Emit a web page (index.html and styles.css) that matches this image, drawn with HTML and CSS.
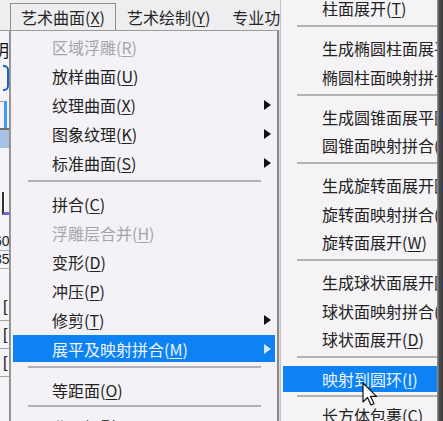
FILE: index.html
```html
<!DOCTYPE html>
<html lang="zh-CN">
<head>
    <meta charset="UTF-8">
    <title>艺术曲面菜单</title>
    <link rel="stylesheet" href="styles.css">
</head>
<body>
    <div class="menubar">
        <span class="mb-item open">艺术曲面(<u>X</u>)</span>
        <span class="mb-item">艺术绘制(<u>Y</u>)</span>
        <span class="mb-item">专业功能</span>
    </div>
    <div class="workspace">
        <div class="sidebar">
            <div class="frag frag-text">明</div>
            <div class="frag frag-box"></div>
            <div class="frag frag-lines"></div>
            <div class="frag frag-fill"></div>
            <div class="frag frag-icon"></div>
            <div class="frag frag-num">60</div>
            <div class="frag frag-num">35</div>
            <div class="frag frag-bracket">[</div>
            <div class="frag frag-bracket">[</div>
            <div class="frag frag-bracket">[</div>
        </div>
    </div>

    <!-- dropdown of 艺术曲面 -->
    <div class="menu main-menu">
        <div class="item disabled"><span class="label">区域浮雕(<u>R</u>)</span></div>
        <div class="item"><span class="label">放样曲面(<u>U</u>)</span></div>
        <div class="item"><span class="label">纹理曲面(<u>X</u>)</span><span class="arrow"></span></div>
        <div class="item"><span class="label">图象纹理(<u>K</u>)</span><span class="arrow"></span></div>
        <div class="item"><span class="label">标准曲面(<u>S</u>)</span><span class="arrow"></span></div>
        <div class="sep"></div>
        <div class="item"><span class="label">拼合(<u>C</u>)</span></div>
        <div class="item disabled"><span class="label">浮雕层合并(<u>H</u>)</span></div>
        <div class="item"><span class="label">变形(<u>D</u>)</span></div>
        <div class="item"><span class="label">冲压(<u>P</u>)</span></div>
        <div class="item"><span class="label">修剪(<u>T</u>)</span><span class="arrow"></span></div>
        <div class="item active"><span class="label">展平及映射拼合(<u>M</u>)</span><span class="arrow"></span></div>
        <div class="sep"></div>
        <div class="item"><span class="label">等距面(<u>O</u>)</span></div>
        <div class="sep last"></div>
        <div class="item"><span class="label">曲面投影(<u>J</u>)</span></div>
    </div>

    <!-- submenu of 展平及映射拼合 -->
    <div class="menu sub-menu">
        <div class="item"><span class="label">柱面展开(<u>T</u>)</span></div>
        <div class="sep"></div>
        <div class="item"><span class="label">生成椭圆柱面展平图</span></div>
        <div class="item"><span class="label">椭圆柱面映射拼合(<u>E</u>)</span></div>
        <div class="sep"></div>
        <div class="item"><span class="label">生成圆锥面展平图</span></div>
        <div class="item"><span class="label">圆锥面映射拼合(<u>N</u>)</span></div>
        <div class="sep"></div>
        <div class="item"><span class="label">生成旋转面展开图</span></div>
        <div class="item"><span class="label">旋转面映射拼合(<u>R</u>)</span></div>
        <div class="item"><span class="label">旋转面展开(<u>W</u>)</span></div>
        <div class="sep"></div>
        <div class="item"><span class="label">生成球状面展开图</span></div>
        <div class="item"><span class="label">球状面映射拼合(<u>B</u>)</span></div>
        <div class="item"><span class="label">球状面展开(<u>D</u>)</span></div>
        <div class="sep"></div>
        <div class="item active"><span class="label">映射到圆环(<u>I</u>)</span></div>
        <div class="sep short"></div>
        <div class="item"><span class="label">长方体包裹(<u>C</u>)</span></div>
    </div>

    <div class="edge"></div>

    <svg class="cursor" width="16" height="26" viewBox="0 0 16 26">
        <path d="M1 1 L1 20 L5.5 15.5 L9 23 L12 21.6 L8.6 14.4 L14.5 14.4 Z" fill="#fff" stroke="#111" stroke-width="1.2" stroke-linejoin="round"/>
    </svg>
</body>
</html>
```

FILE: styles.css
```css
body {
    margin: 0;
    width: 443px;
    height: 421px;
    overflow: hidden;
    position: relative;
    font-family: "Noto Sans CJK SC", "Noto Sans", sans-serif;
    font-size: 16px;
    color: #222;
    background-color: #f1f0f2;
}
u {
    text-decoration: underline;
    text-underline-offset: 2px;
    text-decoration-thickness: 1px;
}

/* top menu bar */
.menubar {
    display: flex;
    align-items: flex-end;
    height: 31px;
    padding-left: 10px;
    box-sizing: border-box;
    background-color: #eeedf0;
    border-bottom: 1px solid #9c9c9c;
    white-space: nowrap;
}
.mb-item {
    height: 26px;
    line-height: 26px;
    padding: 0 10px;
    border: 1px solid transparent;
    border-bottom: none;
    color: #262626;
}
.mb-item.open {
    border-color: #8e8e8e;
}

/* app behind the menu, only the left edge shows */
.workspace {
    display: flex;
    height: 390px;
}
.sidebar {
    width: 9px;
    border-right: 1px solid #8f8f8f;
    background-color: #f4f4f6;
    overflow: hidden;
    display: flex;
    flex-direction: column;
}
.frag {
    flex-shrink: 0;
}
.frag-text {
    margin-top: 8px;
    margin-left: -8px;
    height: 22px;
    line-height: 22px;
    font-size: 17px;
    color: #111;
}
.frag-box {
    margin-top: 4px;
    height: 22px;
    width: 4px;
    margin-left: 3px;
    border: 2px solid #1d64c8;
    border-left: none;
    border-radius: 0 5px 5px 0;
}
.frag-lines {
    margin-top: 10px;
    height: 26px;
    border-top: 1px solid #9a9a9a;
    border-right: 3px solid #3c9cf6;
    width: 4px;
}
.frag-fill {
    height: 18px;
    background-color: #a7c1e2;
    border-top: 2px solid #6f6f6f;
}
.frag-icon {
    margin-top: 44px;
    margin-left: 2px;
    height: 20px;
    width: 5px;
    border-left: 2px solid #333;
    border-bottom: 3px solid #6a6ad8;
}
.frag-num {
    margin-left: -6px;
    height: 17px;
    line-height: 17px;
    font-size: 14px;
    font-family: "Liberation Sans", sans-serif;
    color: #222;
    border-bottom: 1px solid #b0b0b0;
}
.frag-icon + .frag-num {
    margin-top: 18px;
}
.frag-bracket {
    height: 27px;
    line-height: 27px;
    padding-left: 3px;
    font-family: "Liberation Sans", sans-serif;
    color: #222;
    border-bottom: 1px solid #a4a4a4;
}
.frag-num + .frag-bracket {
    margin-top: 24px;
}

/* drop-down menus */
.menu {
    position: absolute;
    box-sizing: border-box;
    white-space: nowrap;
}
.main-menu {
    left: 10px;
    top: 30px;
    width: 269px;
    padding: 1px 2px;
    background-color: #f4f2f6;
    border: 1px solid #9a9a9a;
    border-right: 2px solid #8a8a8a;
    box-shadow: 2px 0 0 #dcdcdf;
}
.sub-menu {
    left: 280px;
    top: -7.25px;
    width: 200px;
    padding: 0 2px;
    background-color: #f5f3f6;
    border: 1px solid #c4c4c8;
}
.item {
    display: flex;
    align-items: center;
    height: 29px;
    padding-left: 39px;
    padding-right: 4px;
    box-sizing: border-box;
    border-top: 1px solid transparent;
    border-bottom: 1px solid transparent;
    background-clip: padding-box;
    line-height: 20px;
}
.sub-menu .item {
    height: 28.5px;
}
.item .label {
    flex: 1;
}
.item.disabled {
    color: #a5a5a8;
}
.item.active {
    background-color: #0c82f3;
    color: #eef5ff;
}
.arrow {
    width: 0;
    height: 0;
    border-left: 7px solid #111;
    border-top: 5px solid transparent;
    border-bottom: 5px solid transparent;
}
.item.active .arrow {
    border-left-color: #d6eaff;
}
.sep {
    height: 2px;
    background-color: #b2b2b4;
    margin: 3px 14px 7px 15px;
}
.sep.last {
    margin-top: 1px;
    margin-bottom: 5px;
}
.sub-menu .sep {
    margin: 3px 0 6.5px 14px;
}
.sub-menu .sep.short {
    margin-top: 2px;
    margin-bottom: 3px;
}

/* dark border of the captured frame */
.edge {
    position: absolute;
    top: 0;
    right: 0;
    width: 6px;
    height: 100%;
    background: linear-gradient(to right, #9a9a9c, #4a4a4c 40%, #3a3a3c);
}
.cursor {
    position: absolute;
    left: 362px;
    top: 382px;
}
```
